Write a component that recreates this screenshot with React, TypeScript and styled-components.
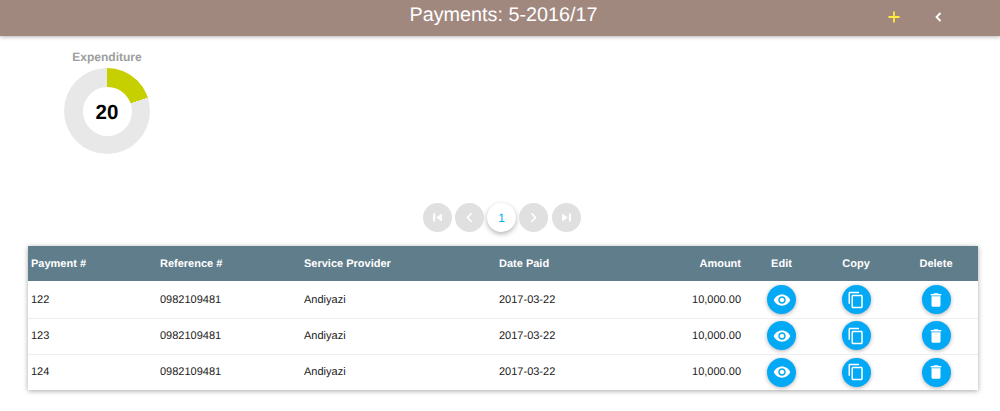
import React from "react";
import styled, { createGlobalStyle } from "styled-components";

const Global = createGlobalStyle`
  html, body { margin: 0; padding: 0; background: #fff; }
  body {
    font-family: "Liberation Sans", Arial, sans-serif;
    overflow: hidden;
    text-rendering: geometricPrecision;
  }
`;
const Page = styled.div`
  width: 1000px;
  height: 411px;
  overflow: hidden;
`;
const AppBar = styled.header`
  height: 36px;
  background: #a1887f;
  box-shadow: 0 1px 4px rgba(0, 0, 0, 0.3);
  display: grid;
  grid-template-columns: 1fr auto 1fr;
  align-items: center;
  color: #fff;
`;
const Title = styled.h1`
  grid-column: 2;
  margin: -7px 0 0 7px;
  font-size: 19.8px;
  font-weight: 400;
  line-height: 24px;
`;
const BarActions = styled.div`
  display: flex;
  justify-content: flex-end;
  align-items: center;
  gap: 30px;
  padding-right: 55px;
  margin-top: -3px;
`;
const BarIcon = styled.svg`
  display: block;
  width: 14px;
  height: 14px;
  fill: none;
  stroke-width: 1.8;
`;
const ChartCard = styled.section`
  width: 86px;
  margin: 14px 0 0 64px;
  display: flex;
  flex-direction: column;
  align-items: center;
`;
const ChartLabel = styled.div`
  font-size: 12px;
  font-weight: 700;
  line-height: 14px;
  color: #9e9e9e;
  white-space: nowrap;
`;
const Donut = styled.div`
  width: 86px;
  height: 86px;
  margin-top: 4px;
  border-radius: 50%;
  background: conic-gradient(#c6cf00 0 20%, #e9e8e8 20% 100%);
  display: flex;
  align-items: center;
  justify-content: center;
`;
const DonutHole = styled.div`
  width: 49px;
  height: 49px;
  border-radius: 50%;
  background: #fff;
  display: flex;
  align-items: center;
  justify-content: center;
  padding-top: 3px;
  box-sizing: border-box;
  font-size: 20.5px;
  font-weight: 700;
  color: #000;
`;
const Pager = styled.nav`
  display: flex;
  justify-content: center;
  gap: 3.25px;
  margin: 49px 0 14px 3px;
`;
const PageButton = styled.div<{ $active?: boolean }>`
  width: 29px;
  height: 29px;
  border-radius: 50%;
  display: flex;
  align-items: center;
  justify-content: center;
  font-size: 12px;
  background: ${(p) => (p.$active ? "#fff" : "#e0e0e0")};
  color: #03a9f4;
  box-shadow: ${(p) => (p.$active ? "0 2px 5px rgba(0,0,0,0.3)" : "none")};
`;
const PagerIcon = styled.svg`
  width: 19px;
  height: 19px;
  fill: #fff;
`;
const TableCard = styled.div`
  margin: 0 22px 0 28px;
  box-shadow: 0 1px 5px rgba(0, 0, 0, 0.35);
`;
const Row = styled.div`
  display: grid;
  grid-template-columns: 129px 144px 195px 132px 117px 73px 76px 84px;
  align-items: center;
  height: 36px;
  padding-bottom: 2px;
  font-size: 11px;
  color: #212121;
  border-top: 1px solid #eeeeee;
  box-sizing: border-box;
`;
const BodyRows = styled.div`
  ${Row}:first-child {
    height: 37px;
    padding-bottom: 0;
    border-top: none;
  }
  ${Row}:last-child {
    padding-bottom: 1px;
  }
`;
const HeadRow = styled(Row)`
  height: 35px;
  padding-bottom: 0;
  background: #607d8b;
  color: #fff;
  font-weight: 700;
  border-top: none;
`;
const Cell = styled.div`
  padding-left: 3px;
  white-space: nowrap;
`;
const AmountCell = styled.div`
  padding-right: 4px;
  text-align: right;
  white-space: nowrap;
`;
const HeadAction = styled.div`
  text-align: center;
  white-space: nowrap;
`;
const ActionCell = styled.div`
  display: flex;
  justify-content: center;
`;
const Fab = styled.div`
  width: 29px;
  height: 29px;
  border-radius: 50%;
  background: #03a9f4;
  box-shadow: 0 1px 4px rgba(0, 0, 0, 0.3);
  display: flex;
  align-items: center;
  justify-content: center;
`;
const FabIcon = styled.svg`
  width: 18px;
  height: 18px;
  fill: #fff;
`;

const Eye = () => (
  <FabIcon viewBox="0 0 24 24">
    <path d="M12 4.5C7 4.5 2.73 7.61 1 12c1.73 4.39 6 7.5 11 7.5s9.27-3.11 11-7.5c-1.73-4.39-6-7.5-11-7.5zM12 17c-2.76 0-5-2.24-5-5s2.24-5 5-5 5 2.24 5 5-2.24 5-5 5zm0-8c-1.66 0-3 1.34-3 3s1.34 3 3 3 3-1.34 3-3-1.34-3-3-3z" />
  </FabIcon>
);
const Copy = () => (
  <FabIcon viewBox="0 0 24 24">
    <path d="M16 1H4c-1.1 0-2 .9-2 2v14h2V3h12V1zm3 4H8c-1.1 0-2 .9-2 2v14c0 1.1.9 2 2 2h11c1.1 0 2-.9 2-2V7c0-1.1-.9-2-2-2zm0 16H8V7h11v14z" />
  </FabIcon>
);
const Trash = () => (
  <FabIcon viewBox="0 0 24 24">
    <path d="M6 19c0 1.1.9 2 2 2h8c1.1 0 2-.9 2-2V7H6v12zM19 4h-3.5l-1-1h-5l-1 1H5v2h14V4z" />
  </FabIcon>
);

const rows = ["122", "123", "124"];

export default function App() {
  return (
    <Page>
      <Global />
      <AppBar>
        <Title>Payments: 5-2016/17</Title>
        <BarActions>
          <BarIcon viewBox="0 0 14 14" stroke="#ffeb3b">
            <path d="M7 1.5v11M1.5 7h11" />
          </BarIcon>
          <BarIcon viewBox="0 0 14 14" stroke="#fff">
            <path d="M9.5 3 5.5 7 9.5 11" />
          </BarIcon>
        </BarActions>
      </AppBar>
      <ChartCard>
        <ChartLabel>Expenditure</ChartLabel>
        <Donut>
          <DonutHole>20</DonutHole>
        </Donut>
      </ChartCard>
      <Pager>
        <PageButton>
          <PagerIcon viewBox="0 0 24 24">
            <path d="M6.5 7h2.5v10H6.5zM17.5 7v10L10.5 12z" />
          </PagerIcon>
        </PageButton>
        <PageButton>
          <PagerIcon viewBox="0 0 24 24">
            <path d="M15.41 7.41 14 6l-6 6 6 6 1.41-1.41L10.83 12z" />
          </PagerIcon>
        </PageButton>
        <PageButton $active>1</PageButton>
        <PageButton>
          <PagerIcon viewBox="0 0 24 24">
            <path d="M10 6 8.59 7.41 13.17 12l-4.58 4.59L10 18l6-6z" />
          </PagerIcon>
        </PageButton>
        <PageButton>
          <PagerIcon viewBox="0 0 24 24">
            <path d="M15 7h2.5v10H15zM6.5 7v10l7-5z" />
          </PagerIcon>
        </PageButton>
      </Pager>
      <TableCard>
        <HeadRow>
          <Cell>Payment #</Cell>
          <Cell>Reference #</Cell>
          <Cell>Service Provider</Cell>
          <Cell>Date Paid</Cell>
          <AmountCell>Amount</AmountCell>
          <HeadAction>Edit</HeadAction>
          <HeadAction>Copy</HeadAction>
          <HeadAction>Delete</HeadAction>
        </HeadRow>
        <BodyRows>
          {rows.map((r) => (
            <Row key={r}>
              <Cell>{r}</Cell>
              <Cell>0982109481</Cell>
              <Cell>Andiyazi</Cell>
              <Cell>2017-03-22</Cell>
              <AmountCell>10,000.00</AmountCell>
              <ActionCell><Fab><Eye /></Fab></ActionCell>
              <ActionCell><Fab><Copy /></Fab></ActionCell>
              <ActionCell><Fab><Trash /></Fab></ActionCell>
            </Row>
          ))}
        </BodyRows>
      </TableCard>
    </Page>
  );
}
